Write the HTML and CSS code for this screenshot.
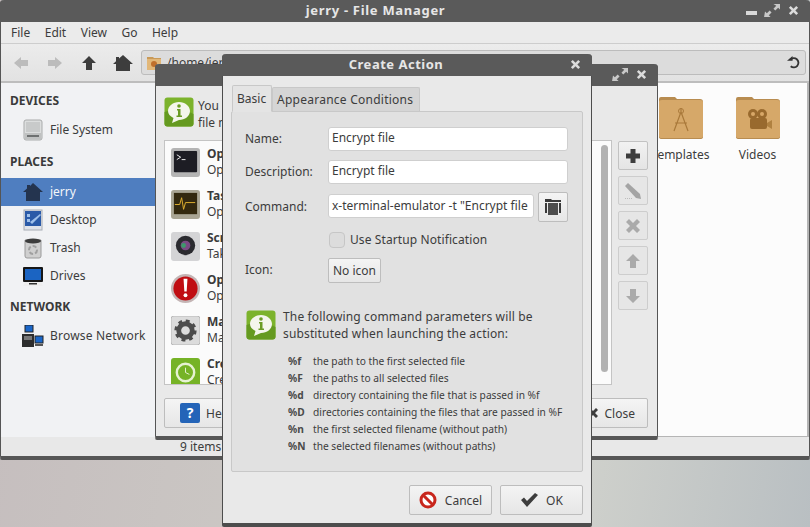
FILE: index.html
```html
<!DOCTYPE html>
<html lang="en">

<head>
    <meta charset="UTF-8">
    <title>jerry - File Manager</title>
    <link rel="stylesheet" href="styles.css">
</head>

<body>
    <svg class="defs" width="0" height="0">
        <symbol id="ic-close" viewBox="0 0 12 12">
            <path d="M1 3 3 1 6 4 9 1 11 3 8 6 11 9 9 11 6 8 3 11 1 9 4 6Z" />
        </symbol>
        <symbol id="ic-max" viewBox="0 0 18 16">
            <path d="M10 1H17V7L15 5 12 8 10 6 13 3ZM1 9 3 11 6 8 8 10 5 13 7 15H0Z" />
        </symbol>
        <symbol id="ic-info" viewBox="0 0 30 30">
            <rect x="0.5" y="0.5" width="29" height="29" rx="3" fill="#7cb32c" />
            <path d="M0.5 15C8 12 20 12 29.5 17V26.5Q29.5 29.5 26.5 29.5H3.5Q0.5 29.5 0.5 26.5Z" fill="#659a20" />
            <path d="M15 5C21 5 26 9 26 14S21 23 15 23L8 26 9.500 21C6 19 4 17 4 14 4 9 9 5 15 5Z" fill="#f4f6ec" />
            <circle cx="15" cy="9" r="1.800" fill="#6b9c24" />
            <path d="M13 12H16.500V18.500H18V20H12.500V18.500H14V13.500H13Z" fill="#6b9c24" />
        </symbol>
        <symbol id="folder" viewBox="0 0 44 44">
            <path d="M2 1H16L18 3H41Q44 3 44 6V41Q44 43 41 43H3Q0 43 0 41V3Q0 1 2 1Z" fill="#b88c50" />
            <path d="M0 6Q0 4 3 4H41Q44 4 44 6V40Q44 42 41 42H3Q0 42 0 40Z" fill="#d6a869" />
        </symbol>
    </svg>

    <div class="desktop"></div>

    <!-- file manager -->
    <div class="window main-win">
        <div class="titlebar">
            <span class="title main-title">jerry - File Manager</span>
            <div class="win-btns">
                <span class="min-btn"></span>
                <svg class="win-max"><use href="#ic-max" /></svg>
                <svg class="win-close"><use href="#ic-close" /></svg>
            </div>
        </div>
        <div class="menubar">
            <span>File</span><span>Edit</span><span>View</span><span>Go</span><span>Help</span>
        </div>
        <div class="toolbar">
            <svg class="tool" viewBox="0 0 16 14"><path fill="#bcbcbc" d="M1 7 8 1V4H15V10H8V13Z" /></svg>
            <svg class="tool" viewBox="0 0 16 14"><path fill="#bcbcbc" d="M15 7 8 1V4H1V10H8V13Z" /></svg>
            <svg class="tool" viewBox="0 0 16 14"><path fill="#3d3d3d" d="M8 0 15 7H11V14H5V7H1Z" /></svg>
            <svg class="tool tool-home" viewBox="0 0 20 16"><path fill="#3d3d3d" d="M10 0 20 9H17V16H3V9H0L3 6.300V2H6V3.600Z" /></svg>
            <div class="location">
                <svg class="loc-icon" viewBox="0 0 16 16">
                    <path fill="#c99a58" d="M1 2H7L8 3H15V15H1Z" />
                    <path fill="#e2b778" d="M1 4H15V15H1Z" />
                    <circle cx="8" cy="9" r="3" fill="#c0702c" />
                </svg>
                <span class="loc-text">/home/jerry</span>
                <svg class="reload" viewBox="0 0 14 14"><path fill="none" stroke="#333" stroke-width="2" d="M3.500 4A5 5 0 1 1 4 11" /><path fill="#333" d="M0 5H6V0Z" /></svg>
            </div>
        </div>
        <div class="main-body">
            <div class="sidebar">
                <div class="side-head">DEVICES</div>
                <div class="side-item">
                    <svg viewBox="0 0 22 22"><rect x="2" y="1" width="18" height="20" rx="2" fill="#dcdede" stroke="#a9abab" /><rect x="4" y="3" width="14" height="10" fill="#c8caca" /><rect x="3" y="14" width="16" height="6" fill="#bfc1c1" /><rect x="5" y="16" width="12" height="2" fill="#6d7070" /></svg>
                    File System
                </div>
                <div class="side-head side-head-2">PLACES</div>
                <div class="side-item active">
                    <svg viewBox="0 0 22 20"><path fill="#24344f" d="M11 1 21 10H18V19H4V10H1L5 6.500V3H8V4Z" /></svg>
                    jerry
                </div>
                <div class="side-item">
                    <svg viewBox="0 0 22 22"><rect x="2" y="1" width="18" height="20" fill="#dfe3ea" stroke="#a8acb4" /><rect x="3" y="2" width="16" height="15" fill="#2a5aa8" /><path fill="#9fc0ea" d="M5 5H8V8H5ZM5 10H8V13H5ZM8 13 18 5 19 6 10 15Z" /></svg>
                    Desktop
                </div>
                <div class="side-item">
                    <svg viewBox="0 0 22 22"><path fill="#cfcfcf" stroke="#9a9a9a" d="M3 3H19V19Q19 21 17 21H5Q3 21 3 19Z" /><ellipse cx="11" cy="4" rx="8" ry="2.500" fill="#3c3c3c" /><circle cx="11" cy="13" r="4" fill="none" stroke="#a0a0a0" stroke-width="2" stroke-dasharray="4 2" /></svg>
                    Trash
                </div>
                <div class="side-item">
                    <svg viewBox="0 0 22 22"><rect x="1" y="2" width="20" height="15" rx="1" fill="#161616" /><rect x="3" y="4" width="16" height="11" fill="#1b64c2" /><path fill="#eee" d="M3 17H19L21 21H1Z" /><rect x="7" y="18" width="8" height="1.500" fill="#333" /></svg>
                    Drives
                </div>
                <div class="side-head side-head-3">NETWORK</div>
                <div class="side-item side-net">
                    <svg viewBox="0 0 22 22"><rect x="3" y="0" width="8" height="7" fill="#1a66c8" stroke="#222" /><rect x="0" y="9" width="12" height="13" fill="#2d2d2d" /><rect x="2" y="11" width="8" height="4" fill="#777" /><rect x="13" y="11" width="8" height="7" fill="#1a66c8" stroke="#222" /><rect x="13" y="19" width="8" height="2" fill="#555" /></svg>
                    Browse Network
                </div>
            </div>
            <div class="files">
                <div class="file">
                    <svg viewBox="0 0 44 44">
                        <use href="#folder" />
                        <path d="M22 12V16M22 16 15 35M22 16 29 35M16 27H28" fill="none" stroke="#a9793a" stroke-width="1.200" />
                        <circle cx="22" cy="15" r="2.500" fill="none" stroke="#a9793a" />
                    </svg>
                    <span>Templates</span>
                </div>
                <div class="file">
                    <svg viewBox="0 0 44 44">
                        <use href="#folder" />
                        <circle cx="17" cy="18" r="5" fill="#996a2e" />
                        <circle cx="26" cy="18" r="5" fill="#996a2e" />
                        <rect x="14" y="22" width="17" height="11" rx="2" fill="#996a2e" />
                        <path d="M31 27 36 24V33L31 30Z" fill="#b08140" />
                        <circle cx="17" cy="18" r="2" fill="#d8a868" />
                        <circle cx="26" cy="18" r="2" fill="#d8a868" />
                    </svg>
                    <span>Videos</span>
                </div>
            </div>
        </div>
        <div class="statusbar"><span class="status-text">9 items</span></div>
    </div>

    <!-- custom actions -->
    <div class="window actions-win">
        <div class="titlebar">
            <span class="title">Custom Actions</span>
            <div class="win-btns">
                <svg class="win-max"><use href="#ic-max" /></svg>
                <svg class="win-close"><use href="#ic-close" /></svg>
            </div>
        </div>
        <div class="actions-body">
            <div class="actions-intro">
                <svg class="info-icon"><use href="#ic-info" /></svg>
                <p>You can configure custom actions that will appear in the<br>file manager's context menus.</p>
            </div>
            <div class="actions-main">
                <div class="action-list">
                    <div class="action">
                        <svg viewBox="0 0 30 30"><rect width="30" height="30" rx="3" fill="#b4b4b4" /><rect x="3" y="3" width="24" height="22" rx="1" fill="#1d1d24" /><path d="M6 7 10 9.500 6 12" fill="none" stroke="#eee" /><path d="M11 12H15" stroke="#eee" /></svg>
                        <div class="action-text"><b>Open Terminal Here</b><span>Open a terminal</span></div>
                    </div>
                    <div class="action">
                        <svg viewBox="0 0 30 30"><rect width="30" height="30" rx="3" fill="#a9a594" /><rect x="3" y="3" width="24" height="22" fill="#33290f" /><path d="M4 15H9L11 8 13 20 15 13H25" fill="none" stroke="#e0b030" /></svg>
                        <div class="action-text"><b>Task Manager</b><span>Open task manager</span></div>
                    </div>
                    <div class="action">
                        <svg viewBox="0 0 30 30"><rect width="30" height="30" rx="3" fill="#d4d4d6" /><circle cx="15" cy="14" r="10" fill="#2b2b30" /><circle cx="15" cy="14" r="5" fill="#7b4a84" /><circle cx="13" cy="14" r="2.500" fill="#3d9a6b" /></svg>
                        <div class="action-text"><b>Screenshot</b><span>Take a screenshot</span></div>
                    </div>
                    <div class="action">
                        <svg viewBox="0 0 30 30"><circle cx="15" cy="15" r="15" fill="#c4b5b5" /><circle cx="15" cy="15" r="12.500" fill="#c00d12" /><path d="M13 5H17L16.200 18H13.800Z" fill="#fff" /><circle cx="15" cy="22" r="2" fill="#fff" /></svg>
                        <div class="action-text"><b>Open as Root</b><span>Open folder as root</span></div>
                    </div>
                    <div class="action">
                        <svg viewBox="0 0 30 30"><rect width="30" height="30" rx="3" fill="#dcdcdc" stroke="#b5b5b5" /><circle cx="15" cy="15" r="7" fill="none" stroke="#4d4d4d" stroke-width="5" /><circle cx="15" cy="15" r="10" fill="none" stroke="#4d4d4d" stroke-width="3" stroke-dasharray="4 3.850" /></svg>
                        <div class="action-text"><b>Manage Settings</b><span>Manage settings</span></div>
                    </div>
                    <div class="action">
                        <svg viewBox="0 0 30 30"><rect width="30" height="30" rx="3" fill="#76b326" /><circle cx="15" cy="15" r="9" fill="none" stroke="#e6f2d2" stroke-width="2.500" /><path d="M15 10V15L19 17" fill="none" stroke="#e6f2d2" /></svg>
                        <div class="action-text"><b>Create Backup</b><span>Create a backup</span></div>
                    </div>
                    <div class="scroll-thumb"></div>
                </div>
                <div class="action-tools">
                    <div class="tool-btn"><svg viewBox="0 0 16 16"><path fill="#3d3d3d" d="M5.500 1H10.500V5.500H15V10.500H10.500V15H5.500V10.500H1V5.500H5.500Z" /></svg></div>
                    <div class="tool-btn off"><svg viewBox="0 0 16 16"><path fill="#a4a4a4" d="M0 3 3 0 15 11 16 16 11 15Z" /><path stroke="#bbb" stroke-dasharray="1 1" d="M0 15.500H8" /></svg></div>
                    <div class="tool-btn off"><svg viewBox="0 0 16 16"><path fill="#aaa" d="M1 4 4 1 8 5 12 1 15 4 11 8 15 12 12 15 8 11 4 15 1 12 5 8Z" /></svg></div>
                    <div class="tool-btn off"><svg viewBox="0 0 16 16"><path fill="#aaa" d="M8 1 15 8H11V15H5V8H1Z" /></svg></div>
                    <div class="tool-btn off"><svg viewBox="0 0 16 16"><path fill="#aaa" d="M8 15 15 8H11V1H5V8H1Z" /></svg></div>
                </div>
            </div>
            <div class="actions-foot">
                <div class="btn help-btn">
                    <svg viewBox="0 0 20 20"><rect width="20" height="20" rx="2" fill="#2464b8" /><text x="10" y="15" class="help-mark">?</text></svg>
                    Help
                </div>
                <div class="btn close-btn">
                    <svg viewBox="0 0 12 12"><path fill="#3d3d3d" d="M1 3 3 1 6 4 9 1 11 3 8 6 11 9 9 11 6 8 3 11 1 9 4 6Z" /></svg>
                    Close
                </div>
            </div>
        </div>
    </div>

    <!-- create action dialog -->
    <div class="window dialog">
        <div class="titlebar">
            <span class="title">Create Action</span>
            <svg class="win-close"><use href="#ic-close" /></svg>
        </div>
        <div class="dialog-body">
            <div class="tabs">
                <div class="tab current">Basic</div>
                <div class="tab">Appearance Conditions</div>
            </div>
            <div class="panel">
                <div class="form">
                    <label>Name:</label>
                    <div class="entry">Encrypt file</div>
                    <label>Description:</label>
                    <div class="entry">Encrypt file</div>
                    <label class="cmd-label">Command:</label>
                    <div class="command">
                        <div class="entry entry-cmd">x-terminal-emulator -t "Encrypt file</div>
                        <div class="btn open-btn">
                            <svg viewBox="0 0 18 18"><path fill="#3a3a3a" d="M1 1H7L8 2H17V4H1ZM1 5H3V15H1ZM15 5H17V15H15Z" /><path fill="#4c4c4c" d="M4 5H14V17H4Z" /></svg>
                        </div>
                    </div>
                    <span></span>
                    <div class="check-row"><span class="check"></span>Use Startup Notification</div>
                    <label>Icon:</label>
                    <div class="icon-row"><div class="btn icon-btn">No icon</div></div>
                </div>
                <div class="note">
                    <svg class="info-icon"><use href="#ic-info" /></svg>
                    <p>The following command parameters will be<br>substituted when launching the action:</p>
                </div>
                <dl class="params">
                    <dt>%f</dt><dd>the path to the first selected file</dd>
                    <dt>%F</dt><dd>the paths to all selected files</dd>
                    <dt>%d</dt><dd>directory containing the file that is passed in %f</dd>
                    <dt>%D</dt><dd>directories containing the files that are passed in %F</dd>
                    <dt>%n</dt><dd>the first selected filename (without path)</dd>
                    <dt>%N</dt><dd>the selected filenames (without paths)</dd>
                </dl>
            </div>
            <div class="dialog-foot">
                <div class="btn foot-btn">
                    <svg viewBox="0 0 18 18"><circle cx="9" cy="9" r="7" fill="#fff" stroke="#c8261c" stroke-width="3" /><path d="M4 4 14 14" stroke="#c8261c" stroke-width="3" /></svg>
                    Cancel
                </div>
                <div class="btn foot-btn">
                    <svg viewBox="0 0 18 18"><path fill="#3d3d3d" d="M1 9 4 6.500 7 10 15 2 18 4 7 16Z" /></svg>
                    OK
                </div>
            </div>
        </div>
    </div>
</body>

</html>
```

FILE: styles.css
```css
* {
    padding: 0;
    margin: 0;
    box-sizing: border-box;
}

html,
body {
    width: 810px;
    height: 527px;
    overflow: hidden;
}

body {
    position: relative;
    font-family: "Noto Sans", "Open Sans", sans-serif;
    font-size: 12px;
    color: #3c3c3c;
}

.defs {
    position: absolute;
}

.desktop {
    position: absolute;
    inset: 0;
    background: linear-gradient(100deg, #c4bcbd 0%, #ccc9c5 45%, #d2d3cd 70%, #b9bfc2 100%);
}

/* windows */
.window {
    position: absolute;
    display: flex;
    flex-direction: column;
    background: #e9e9e9;
    border: 1px solid #555;
    border-top: 0;
    border-bottom: 4px solid #565656;
    border-radius: 4px 4px 2px 2px;
}

.main-win {
    left: 0;
    top: 0;
    width: 810px;
    height: 460px;
}

.actions-win {
    left: 155px;
    top: 64px;
    width: 503px;
    height: 376px;
}

.dialog {
    left: 222px;
    top: 54px;
    width: 370px;
    height: 473px;
    border-color: #4d4d4d;
}

.titlebar {
    display: flex;
    align-items: center;
    height: 22px;
    flex: none;
    padding: 0 11px 2px 0;
    background: #5a5a5a;
    border-radius: 4px 4px 0 0;
    margin: 0 -1px;
}

.title {
    flex: 1;
    text-align: center;
    font-weight: bold;
    font-size: 13px;
    letter-spacing: 0.5px;
    color: #e6e6e6;
}

.main-title {
    padding-left: 5px;
    letter-spacing: 0.7px;
}

.win-btns {
    display: flex;
    align-items: center;
    gap: 7px;
}

.win-close {
    width: 11px;
    height: 11px;
    fill: #dcdcdc;
}

.win-max {
    width: 17px;
    height: 15px;
    fill: #c8c8c8;
}

.min-btn {
    width: 11px;
    height: 4px;
    margin-top: 5px;
    background: #d8d8d8;
}

/* file manager */
.menubar {
    display: flex;
    gap: 14.500px;
    height: 22px;
    flex: none;
    align-items: center;
    padding-left: 10px;
    background: #ebebeb;
    border-bottom: 1px solid #cdcdcd;
}

.toolbar {
    display: flex;
    align-items: center;
    height: 39px;
    flex: none;
    padding: 0 3px 0 12px;
    background: linear-gradient(#ececec, #e2e2e2);
    border-bottom: 2px solid #bdbdbd;
}

.tool {
    width: 16px;
    height: 14px;
    margin-right: 18px;
}

.tool-home {
    width: 20px;
    height: 16px;
    margin-left: -2px;
    margin-right: 8px;
}

.location {
    flex: 1;
    display: flex;
    align-items: center;
    height: 25px;
    padding: 0 4px;
    background: #dcdcdc;
    border: 1px solid #bcbcbc;
    border-radius: 3px;
}

.loc-icon {
    width: 16px;
    height: 16px;
    margin-right: 5px;
}

.loc-text {
    flex: 1;
}

.reload {
    width: 13px;
    height: 13px;
    margin-right: 1px;
}

.main-body {
    flex: 1;
    display: flex;
    min-height: 0;
}

.sidebar {
    width: 154px;
    flex: none;
    padding-top: 9px;
    background: #f1f2f4;
}

.side-head {
    height: 17px;
    line-height: 17px;
    padding-left: 9px;
    margin-bottom: 7px;
    font-weight: bold;
    color: #3a3a3a;
}

.side-head-2 {
    margin-top: 9px;
    margin-bottom: 8px;
}

.side-head-3 {
    margin-top: 8px;
    margin-bottom: 7px;
}

.side-item {
    display: flex;
    align-items: center;
    gap: 6px;
    height: 28px;
    padding: 0 0 1px 21px;
}

.side-net {
    letter-spacing: 0.2px;
}

.side-item svg {
    width: 22px;
    height: 22px;
}

.side-item.active {
    background: #4f7ec0;
    color: #f4f6fa;
}

.files {
    flex: 1;
    display: flex;
    justify-content: flex-end;
    padding: 13px 11px 0 0;
    background: #fcfcfc;
    border-left: 1px solid #d8d8d8;
    border-right: 2px solid #b5b5b5;
    border-bottom: 1px solid #b5b5b5;
}

.file {
    display: flex;
    flex-direction: column;
    align-items: center;
    width: 77px;
    gap: 6px;
}

.file svg {
    width: 44px;
    height: 44px;
}

.statusbar {
    height: 19px;
    flex: none;
    line-height: 19px;
    background: #e8e8e8;
}

.status-text {
    margin-left: 179px;
}

/* custom actions */
.actions-body {
    flex: 1;
    display: flex;
    flex-direction: column;
    padding: 11px 9px 8px 8px;
}

.actions-intro {
    display: flex;
    gap: 4px;
    height: 43px;
    flex: none;
    line-height: 17px;
}

.info-icon {
    width: 30px;
    height: 30px;
    flex: none;
}

.actions-intro p {
    white-space: nowrap;
}

.actions-main {
    display: flex;
    gap: 6px;
    height: 245px;
    flex: none;
}

.action-list {
    position: relative;
    width: 448px;
    padding: 7px 0 0 6px;
    background: #fbfbfb;
    border: 1px solid #c4c4c4;
    overflow: hidden;
}

.scroll-thumb {
    position: absolute;
    right: 3px;
    top: 4px;
    width: 7px;
    height: 227px;
    border-radius: 4px;
    background: #b2b2b2;
}

.action {
    display: flex;
    gap: 7px;
    height: 42px;
}

.action > svg {
    width: 29px;
    height: 29px;
    flex: none;
}

.action-text {
    display: flex;
    flex-direction: column;
    margin-top: -2px;
    line-height: 16px;
}

.action-text b {
    color: #3a3a3a;
}

.action-tools {
    display: flex;
    flex-direction: column;
    gap: 6px;
    margin-top: 1px;
}

.tool-btn {
    display: flex;
    align-items: center;
    justify-content: center;
    width: 30px;
    height: 29px;
    background: linear-gradient(#f2f2f2, #e4e4e4);
    border: 1px solid #c2c2c2;
    border-radius: 2px;
}

.tool-btn svg {
    width: 16px;
    height: 16px;
}

.tool-btn.off {
    background: #e6e6e6;
    border-color: #cdcdcd;
}

.actions-foot {
    display: flex;
    justify-content: space-between;
    margin-top: 13px;
}

.btn {
    display: flex;
    align-items: center;
    justify-content: center;
    background: linear-gradient(#f4f4f4, #e6e6e6);
    border: 1px solid #bdbdbd;
    border-radius: 2px;
}

.help-btn,
.close-btn {
    gap: 6px;
    width: 110px;
    height: 30px;
}

.help-btn {
    justify-content: flex-start;
    padding-left: 15px;
}

.help-btn svg {
    width: 20px;
    height: 20px;
}

.close-btn svg {
    width: 12px;
    height: 12px;
}

.close-btn {
    justify-content: flex-end;
    padding-right: 12px;
}

.help-mark {
    font-size: 14px;
    font-weight: bold;
    fill: #fff;
    text-anchor: middle;
}

/* create action dialog */
.dialog-body {
    flex: 1;
    display: flex;
    flex-direction: column;
    padding: 9px 8px 8px 8px;
    background: #e9e9e9;
}

.tabs {
    display: flex;
    align-items: flex-end;
    height: 26px;
    padding-left: 1px;
    position: relative;
    z-index: 1;
}

.tab {
    height: 24px;
    line-height: 24px;
    padding: 0 6px 0 4px;
    letter-spacing: 0.25px;
    background: #d5d5d5;
    border: 1px solid #c8c8c8;
    border-bottom: 0;
    border-radius: 2px 2px 0 0;
}

.tab.current {
    height: 27px;
    width: 40px;
    margin-bottom: -1px;
    letter-spacing: 0;
    line-height: 25px;
    background: #e4e4e4;
    border-bottom: 1px solid #e4e4e4;
}

.panel {
    height: 361px;
    flex: none;
    padding: 15px 14px 0 13px;
    background: #e1e1e1;
    border: 1px solid #c8c8c8;
    border-radius: 2px;
}

.form {
    display: grid;
    grid-template-columns: 83px 240px;
    row-gap: 9px;
    align-items: center;
}

.form label {
    margin-bottom: 2px;
}

.form .cmd-label {
    margin-bottom: 4px;
}

.entry {
    height: 24px;
    line-height: 20px;
    padding-left: 3px;
    white-space: nowrap;
    overflow: hidden;
    background: #fff;
    border: 1px solid #cfcfcf;
    border-radius: 3px;
}

.command {
    display: flex;
    align-items: center;
    gap: 4px;
    height: 30px;
    margin: -1px 0 1px;
}

.entry-cmd {
    width: 206px;
    line-height: 22px;
    margin-bottom: 3px;
}

.open-btn {
    width: 30px;
    height: 30px;
}

.open-btn svg {
    width: 18px;
    height: 18px;
}

.check-row {
    display: flex;
    align-items: center;
    gap: 5px;
    height: 17px;
    margin: -1px 0 1px;
    letter-spacing: 0.1px;
}

.check {
    width: 16px;
    height: 16px;
    margin-left: 1px;
    background: #dcdcdc;
    border: 1px solid #c6c6c6;
    border-radius: 4px;
}

.icon-row {
    display: flex;
}

.icon-btn {
    width: 53px;
    height: 25px;
}

.note {
    display: flex;
    gap: 7px;
    margin: 27px 0 0 1px;
    line-height: 17px;
}

.note p {
    margin-top: -2px;
    letter-spacing: 0.15px;
}

.params {
    display: grid;
    grid-template-columns: 25px auto;
    grid-auto-rows: 17px;
    align-items: center;
    margin: 10px 0 0 43px;
    font-size: 10.200px;
    white-space: nowrap;
}

.params dt {
    font-weight: bold;
    color: #4a4a4a;
}

.dialog-foot {
    display: flex;
    justify-content: flex-end;
    gap: 8px;
    margin-top: 13px;
}

.foot-btn {
    gap: 8px;
    width: 83px;
    height: 30px;
}

.foot-btn svg {
    width: 18px;
    height: 18px;
}
```
